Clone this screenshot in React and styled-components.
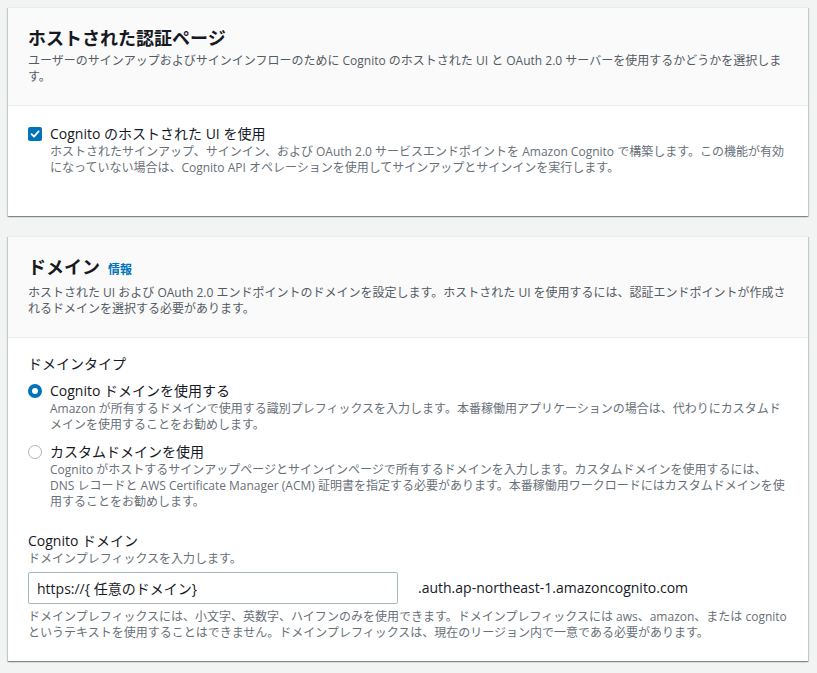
import React from 'react';
import styled, { createGlobalStyle } from 'styled-components';

const GlobalStyle = createGlobalStyle`
  html, body {
    margin: 0;
    padding: 0;
    background: #f2f3f3;
  }
  body {
    font-family: "Open Sans", "Noto Sans CJK JP", sans-serif;
    color: #16191f;
    -webkit-font-smoothing: antialiased;
  }
`;

const Page = styled.div`
  padding: 7px 9px 12px 8px;
  display: flex;
  flex-direction: column;
  gap: 20px;
`;

const Card = styled.section`
  background: #ffffff;
  border-top: 1px solid #eaeded;
  box-shadow: 0 1px 1px 0 rgba(0, 28, 36, 0.3), 1px 1px 1px 0 rgba(0, 28, 36, 0.15),
    -1px 1px 1px 0 rgba(0, 28, 36, 0.15);
`;

const CardHeader = styled.header`
  background: #fafafa;
  border-bottom: 1px solid #eaeded;
  padding: 19px 20px 20px;
`;

const Title = styled.h2`
  margin: 0 0 4px;
  font-size: 18px;
  line-height: 22px;
  font-weight: 700;
  color: #16191f;
  display: flex;
  align-items: baseline;
`;

const InfoLink = styled.a`
  margin-left: 8px;
  font-size: 12px;
  font-weight: 700;
  color: #0073bb;
  text-decoration: none;
  cursor: pointer;
`;

const HeaderText = styled.p`
  margin: 0;
  font-size: 12px;
  line-height: 16px;
  color: #545b64;
`;

const CardBody = styled.div`
  padding: ${({ $pad }) => $pad || '18px 20px 40px'};
`;

const Option = styled.label`
  display: grid;
  grid-template-columns: 14px 1fr;
  column-gap: 8px;
  margin-bottom: ${({ $gap }) => $gap || '0'};
  cursor: pointer;
`;

const OptionLabel = styled.span`
  font-size: 14px;
  line-height: 20px;
  color: #16191f;
`;

const OptionText = styled.span`
  grid-column: 2;
  font-size: 12px;
  line-height: 16px;
  color: #687078;
`;

const CheckBox = styled.span`
  width: 14px;
  height: 14px;
  margin-top: 3px;
  border-radius: 2px;
  background: #0073bb;
  display: flex;
  align-items: center;
  justify-content: center;
`;

const Radio = styled.span`
  box-sizing: border-box;
  width: 14px;
  height: 14px;
  margin-top: 3px;
  border-radius: 50%;
  background: #ffffff;
  border: ${({ $checked }) => ($checked ? '4px solid #0073bb' : '1.5px solid #aab7b8')};
`;

const GroupLabel = styled.div`
  font-size: 14px;
  line-height: 20px;
  color: #16191f;
  margin-bottom: 7px;
`;

const Field = styled.div`
  margin-top: 21px;
`;

const FieldLabel = styled.div`
  font-size: 14px;
  line-height: 20px;
  color: #16191f;
`;

const FieldHint = styled.div`
  font-size: 12px;
  line-height: 16px;
  color: #687078;
  margin-bottom: ${({ $mb }) => $mb || '0'};
  margin-top: ${({ $mt }) => $mt || '0'};
`;

const InputRow = styled.div`
  display: flex;
  align-items: center;
  gap: 20px;
`;

const Input = styled.input`
  box-sizing: border-box;
  width: 370px;
  height: 32px;
  padding: 0 8px;
  border: 1px solid #aab7b8;
  border-radius: 2px;
  background: #ffffff;
  font-family: inherit;
  font-size: 14px;
  color: #16191f;
  outline: none;
`;

const Suffix = styled.span`
  font-size: 14px;
  line-height: 20px;
  color: #16191f;
`;

const CheckIcon = () => (
  <svg width="10" height="10" viewBox="0 0 10 10" fill="none">
    <path d="M1.5 5.2 L4 7.6 L8.6 2.4" stroke="#ffffff" strokeWidth="1.8" strokeLinecap="round" strokeLinejoin="round" />
  </svg>
);

export default function App() {
  return (
    <>
      <GlobalStyle />
      <Page>
        <Card>
          <CardHeader>
            <Title>ホストされた認証ページ</Title>
            <HeaderText>
              ユーザーのサインアップおよびサインインフローのために Cognito のホストされた UI と OAuth 2.0 サーバーを使用するかどうかを選択します。
            </HeaderText>
          </CardHeader>
          <CardBody>
            <Option>
              <CheckBox><CheckIcon /></CheckBox>
              <OptionLabel>Cognito のホストされた UI を使用</OptionLabel>
              <OptionText>
                ホストされたサインアップ、サインイン、および OAuth 2.0 サービスエンドポイントを Amazon Cognito で構築します。この機能が有効になっていない場合は、Cognito API オペレーションを使用してサインアップとサインインを実行します。
              </OptionText>
            </Option>
          </CardBody>
        </Card>

        <Card>
          <CardHeader>
            <Title>
              ドメイン<InfoLink>情報</InfoLink>
            </Title>
            <HeaderText>
              ホストされた UI および OAuth 2.0 エンドポイントのドメインを設定します。ホストされた UI を使用するには、認証エンドポイントが作成されるドメインを選択する必要があります。
            </HeaderText>
          </CardHeader>
          <CardBody $pad="16px 20px 20px">
            <GroupLabel>ドメインタイプ</GroupLabel>
            <Option $gap="9px">
              <Radio $checked />
              <OptionLabel>Cognito ドメインを使用する</OptionLabel>
              <OptionText>
                Amazon が所有するドメインで使用する識別プレフィックスを入力します。本番稼働用アプリケーションの場合は、代わりにカスタムドメインを使用することをお勧めします。
              </OptionText>
            </Option>
            <Option>
              <Radio />
              <OptionLabel>カスタムドメインを使用</OptionLabel>
              <OptionText>
                Cognito がホストするサインアップページとサインインページで所有するドメインを入力します。カスタムドメインを使用するには、DNS レコードと AWS Certificate Manager (ACM) 証明書を指定する必要があります。本番稼働用ワークロードにはカスタムドメインを使用することをお勧めします。
              </OptionText>
            </Option>
            <Field>
              <FieldLabel>Cognito ドメイン</FieldLabel>
              <FieldHint $mb="5px">ドメインプレフィックスを入力します。</FieldHint>
              <InputRow>
                <Input defaultValue="https://{ 任意のドメイン}" />
                <Suffix>.auth.ap-northeast-1.amazoncognito.com</Suffix>
              </InputRow>
              <FieldHint $mt="5px">
                ドメインプレフィックスには、小文字、英数字、ハイフンのみを使用できます。ドメインプレフィックスには aws、amazon、または cognito というテキストを使用することはできません。ドメインプレフィックスは、現在のリージョン内で一意である必要があります。
              </FieldHint>
            </Field>
          </CardBody>
        </Card>
      </Page>
    </>
  );
}
